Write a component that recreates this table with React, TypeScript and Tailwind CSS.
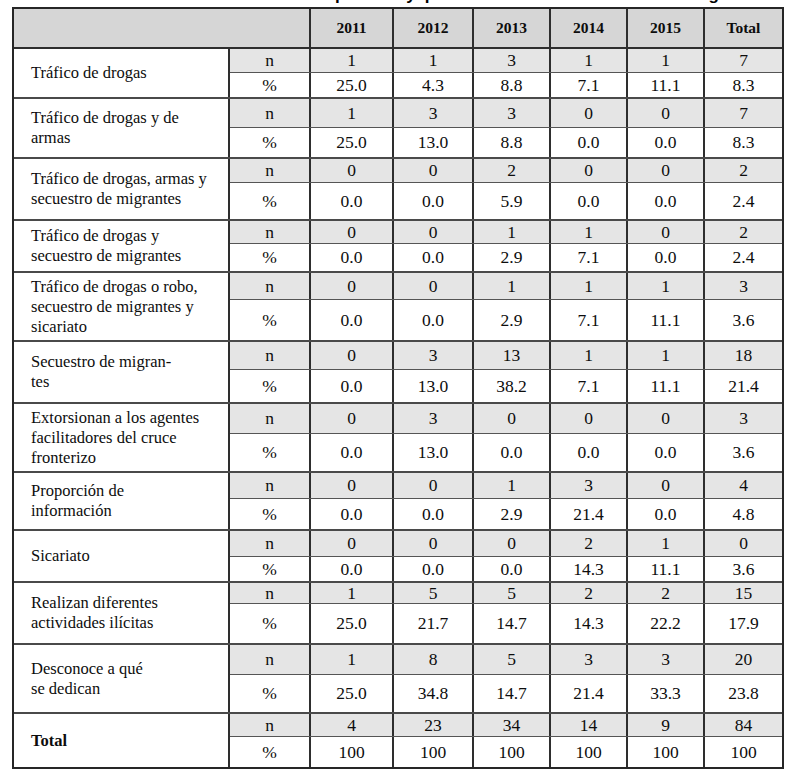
import React from "react";

type Group = { label: string[]; bold?: boolean; n: string[]; p: string[]; hn: number; hp: number };

const groups: Group[] = [
  { label: ["Tráfico de drogas"], n: ["1", "1", "3", "1", "1", "7"], p: ["25.0", "4.3", "8.8", "7.1", "11.1", "8.3"], hn: 24, hp: 26 },
  { label: ["Tráfico de drogas y de", "armas"], n: ["1", "3", "3", "0", "0", "7"], p: ["25.0", "13.0", "8.8", "0.0", "0.0", "8.3"], hn: 29, hp: 31 },
  { label: ["Tráfico de drogas, armas y", "secuestro de migrantes"], n: ["0", "0", "2", "0", "0", "2"], p: ["0.0", "0.0", "5.9", "0.0", "0.0", "2.4"], hn: 24, hp: 38 },
  { label: ["Tráfico de drogas y", "secuestro de migrantes"], n: ["0", "0", "1", "1", "0", "2"], p: ["0.0", "0.0", "2.9", "7.1", "0.0", "2.4"], hn: 23, hp: 29 },
  { label: ["Tráfico de drogas o robo,", "secuestro de migrantes y", "sicariato"], n: ["0", "0", "1", "1", "1", "3"], p: ["0.0", "0.0", "2.9", "7.1", "11.1", "3.6"], hn: 27, hp: 42 },
  { label: ["Secuestro de migran-", "tes"], n: ["0", "3", "13", "1", "1", "18"], p: ["0.0", "13.0", "38.2", "7.1", "11.1", "21.4"], hn: 28, hp: 34 },
  { label: ["Extorsionan a los agentes", "facilitadores del cruce", "fronterizo"], n: ["0", "3", "0", "0", "0", "3"], p: ["0.0", "13.0", "0.0", "0.0", "0.0", "3.6"], hn: 30, hp: 39 },
  { label: ["Proporción de", "información"], n: ["0", "0", "1", "3", "0", "4"], p: ["0.0", "0.0", "2.9", "21.4", "0.0", "4.8"], hn: 26, hp: 32 },
  { label: ["Sicariato"], n: ["0", "0", "0", "2", "1", "0"], p: ["0.0", "0.0", "0.0", "14.3", "11.1", "3.6"], hn: 26, hp: 26 },
  { label: ["Realizan diferentes", "actividades ilícitas"], n: ["1", "5", "5", "2", "2", "15"], p: ["25.0", "21.7", "14.7", "14.3", "22.2", "17.9"], hn: 21, hp: 41 },
  { label: ["Desconoce a qué", "se dedican"], n: ["1", "8", "5", "3", "3", "20"], p: ["25.0", "34.8", "14.7", "21.4", "33.3", "23.8"], hn: 30, hp: 39 },
  { label: ["Total"], bold: true, n: ["4", "23", "34", "14", "9", "84"], p: ["100", "100", "100", "100", "100", "100"], hn: 23, hp: 32 },
];

const years = ["2011", "2012", "2013", "2014", "2015", "Total"];

export default function App() {
  return (
    <div className="w-[800px] h-[775px] bg-white overflow-hidden text-[#0d0d0d]" style={{ fontFamily: '"Liberation Serif", "Times New Roman", serif' }}>
      <div className="h-[6px] overflow-hidden">
        <div className="-mt-[15px] flex whitespace-nowrap font-bold text-[17px] leading-[20px] text-black" style={{ fontFamily: '"Liberation Sans", Arial, sans-serif' }}>
          <span className="ml-[335px]">por año</span>
          <span className="ml-[9px]">y</span>
          <span className="ml-[9px]">por</span>
          <span className="ml-[40px]">Entidad Federativa de la región</span>
        </div>
      </div>
      <div className="ml-[12px] mt-[1px] w-[772px] border-2 border-[#262626]">
        <div className="flex h-[40px] bg-[#d6d6d6] border-b-2 border-[#2e2e2e]">
          <div className="w-[297px] border-r-2 border-[#2e2e2e]" />
          {years.map((y, i) => (
            <div
              key={y}
              className={
                (i === 0 ? "w-[83px] " : i === 1 ? "w-[80px] " : "w-[77px] ") +
                (i < 5 ? "border-r-2 border-[#2e2e2e] " : "") +
                "flex items-center justify-center font-bold text-[15.5px]"
              }
            >
              {y}
            </div>
          ))}
        </div>
        {groups.map((g, gi) => (
          <div key={gi} className={"flex " + (gi < groups.length - 1 ? "border-b-2 border-[#4a4a4a]" : "")}>
            <div className="w-[216px] shrink-0 border-r-2 border-[#2e2e2e] flex items-center pl-[17px] text-[16.5px] leading-[20px] whitespace-nowrap">
              <div className={g.bold ? "font-bold" : ""}>
                {g.label.map((l, li) => (
                  <div key={li}>{l}</div>
                ))}
              </div>
            </div>
            <div className="flex-1 flex flex-col">
              <div className="flex bg-[#e5e5e5] border-b border-[#555555]" style={{ height: g.hn }}>
                <Cells label="n" vals={g.n} />
              </div>
              <div className="flex bg-white" style={{ height: g.hp - 2 }}>
                <Cells label="%" vals={g.p} />
              </div>
            </div>
          </div>
        ))}
      </div>
    </div>
  );
}

function Cells({ label, vals }: { label: string; vals: string[] }) {
  return (
    <>
      <div className="w-[81px] border-r-2 border-[#2e2e2e] flex items-center justify-center text-[17.5px]">{label}</div>
      {vals.map((v, i) => (
        <div
          key={i}
          className={
            (i === 0 ? "w-[83px] " : i === 1 ? "w-[80px] " : "w-[77px] ") +
            (i < 5 ? "border-r-2 border-[#2e2e2e] " : "") +
            "flex items-center justify-center text-[17.5px]"
          }
        >
          {v}
        </div>
      ))}
    </>
  );
}
